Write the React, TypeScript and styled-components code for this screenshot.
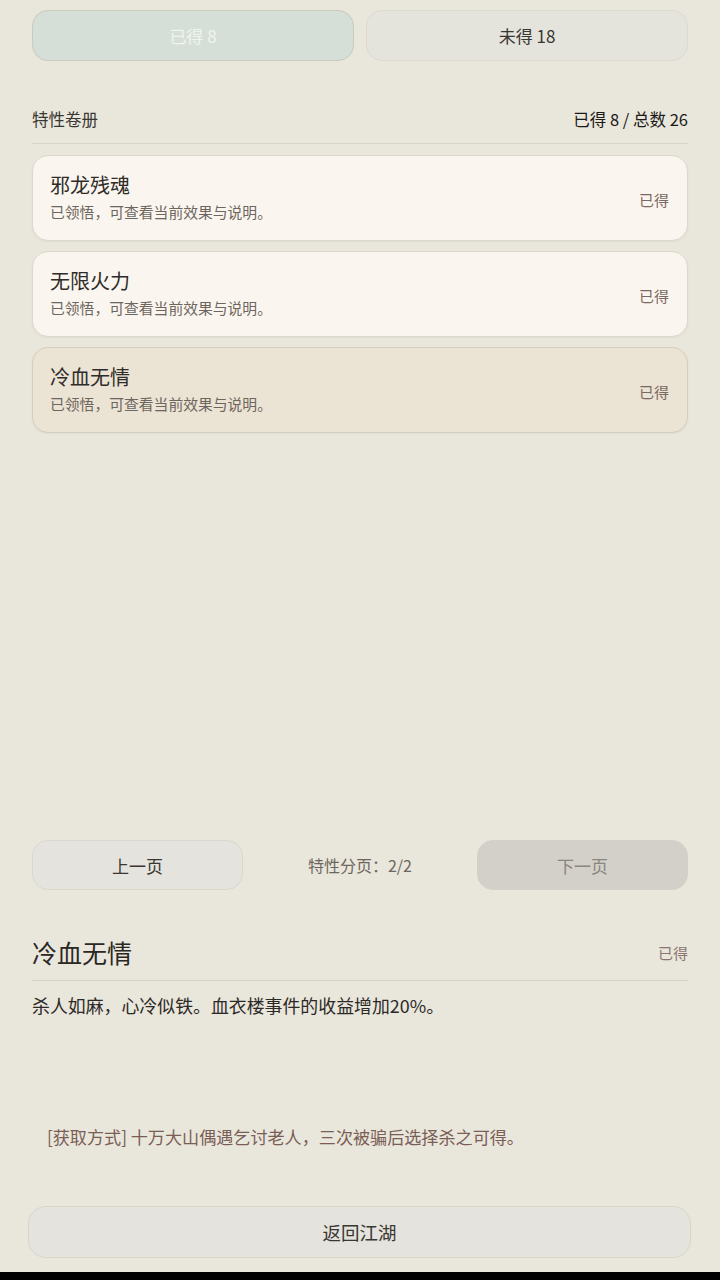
import { useState } from "react";
import styled, { createGlobalStyle } from "styled-components";

const GlobalStyle = createGlobalStyle`
  html, body {
    margin: 0;
    padding: 0;
    background: #e9e6dc;
  }
  body {
    font-family: "Noto Sans CJK SC", "Noto Sans", sans-serif;
    color: #2f2b28;
  }
  * {
    box-sizing: border-box;
  }
`;

const Page = styled.div`
  height: 100vh;
  min-height: 1280px;
  display: flex;
  flex-direction: column;
  padding: 10px 32px 0;
  background: #e9e6dc;
`;

const Tabs = styled.div`
  display: grid;
  grid-template-columns: 1fr 1fr;
  gap: 12px;
`;

const Tab = styled.button<{ $active: boolean }>`
  height: 51px;
  border-radius: 16px;
  font-family: inherit;
  font-size: 17px;
  border: 1.5px solid ${(p) => (p.$active ? "#c9cbbd" : "#dcdad0")};
  background: ${(p) => (p.$active ? "#d5dfd7" : "#e4e3dc")};
  color: ${(p) => (p.$active ? "#f1f3ee" : "#3a3632")};
  cursor: pointer;
`;

const SectionHead = styled.div`
  margin-top: 46px;
  padding-bottom: 12px;
  border-bottom: 1px solid #d7d3c8;
  display: flex;
  justify-content: space-between;
  align-items: center;
  line-height: 24px;
  font-size: 16.5px;
  color: #3a3632;
`;

const Count = styled.span`
  font-size: 16.5px;
  color: #1c1a18;
`;

const List = styled.ul`
  flex: 1;
  list-style: none;
  margin: 11px 0 0;
  padding: 0;
  display: flex;
  flex-direction: column;
  gap: 10px;
`;

const Card = styled.li<{ $selected: boolean }>`
  height: 86px;
  border-radius: 16px;
  border: 1px solid ${(p) => (p.$selected ? "#d5cdbd" : "#dcd8ce")};
  background: ${(p) => (p.$selected ? "#ebe3d4" : "#faf6ef")};
  box-shadow: 0 1px 2px rgba(80, 70, 50, 0.06);
  padding: 16px 18px 0 17px;
  display: grid;
  grid-template-columns: 1fr auto;
  grid-template-rows: 26px 20px;
  row-gap: 4px;
  cursor: pointer;
`;

const CardTitle = styled.div`
  font-size: 20px;
  line-height: 26px;
  color: #2f2b28;
`;

const CardDesc = styled.div`
  grid-row: 2;
  font-size: 14.8px;
  line-height: 20px;
  color: #6e665e;
`;

const Badge = styled.span<{ $muted?: boolean }>`
  font-size: 15px;
  color: ${(p) => (p.$muted ? "#8b7670" : "#7a6863")};
`;

const CardBadge = styled(Badge)`
  grid-column: 2;
  grid-row: 1 / 3;
  align-self: center;
  margin-top: 4px;
`;

const Pager = styled.div`
  height: 50px;
  display: grid;
  grid-template-columns: 211px 1fr 211px;
  align-items: center;
`;

const PagerButton = styled.button<{ $disabled?: boolean }>`
  height: 50px;
  border-radius: 16px;
  font-family: inherit;
  font-size: 17px;
  border: 1px solid ${(p) => (p.$disabled ? "#d3d0ca" : "#dad7cd")};
  background: ${(p) => (p.$disabled ? "#d3d0ca" : "#e4e3dd")};
  color: ${(p) => (p.$disabled ? "#8a857e" : "#3a3632")};
`;

const PagerText = styled.div`
  text-align: center;
  font-size: 16px;
  color: #6e665e;
`;

const DetailHead = styled.div`
  margin-top: 46px;
  padding-bottom: 12px;
  border-bottom: 1px solid #d5d1c6;
  display: flex;
  justify-content: space-between;
  align-items: center;
`;

const DetailTitle = styled.h2`
  margin: 0;
  font-size: 25px;
  line-height: 32px;
  font-weight: 400;
  color: #2a2724;
`;

const DetailText = styled.p`
  margin: 12px 0 0;
  font-size: 17.9px;
  line-height: 24px;
  color: #2c2926;
`;

const Source = styled.p`
  margin: 109px 0 0;
  padding-left: 15px;
  font-size: 17.1px;
  line-height: 22px;
  color: #7a5e55;
`;

const BackButton = styled.button`
  margin: 58px -3px 14px -4px;
  height: 52px;
  border-radius: 18px;
  border: 1px solid #d8d5cb;
  background: #e4e3dd;
  font-family: inherit;
  font-size: 18.5px;
  color: #3a3632;
`;

const NavBar = styled.div`
  height: 8px;
  margin: 0 -32px;
  background: #000;
`;

const traits = [
  { name: "邪龙残魂", desc: "已领悟，可查看当前效果与说明。" },
  { name: "无限火力", desc: "已领悟，可查看当前效果与说明。" },
  { name: "冷血无情", desc: "已领悟，可查看当前效果与说明。" },
];

export default function App() {
  const [tab, setTab] = useState<"got" | "missing">("got");
  const [selected, setSelected] = useState(2);

  return (
    <>
      <GlobalStyle />
      <Page>
        <Tabs>
          <Tab $active={tab === "got"} onClick={() => setTab("got")}>
            已得 8
          </Tab>
          <Tab $active={tab === "missing"} onClick={() => setTab("missing")}>
            未得 18
          </Tab>
        </Tabs>

        <SectionHead>
          <span>特性卷册</span>
          <Count>已得 8 / 总数 26</Count>
        </SectionHead>

        <List>
          {traits.map((t, i) => (
            <Card key={t.name} $selected={i === selected} onClick={() => setSelected(i)}>
              <CardTitle>{t.name}</CardTitle>
              <CardDesc>{t.desc}</CardDesc>
              <CardBadge>已得</CardBadge>
            </Card>
          ))}
        </List>

        <Pager>
          <PagerButton>上一页</PagerButton>
          <PagerText>特性分页：2/2</PagerText>
          <PagerButton $disabled>下一页</PagerButton>
        </Pager>

        <DetailHead>
          <DetailTitle>{traits[selected].name}</DetailTitle>
          <Badge $muted>已得</Badge>
        </DetailHead>
        <DetailText>杀人如麻，心冷似铁。血衣楼事件的收益增加20%。</DetailText>
        <Source>[获取方式] 十万大山偶遇乞讨老人，三次被骗后选择杀之可得。</Source>

        <BackButton>返回江湖</BackButton>
        <NavBar />
      </Page>
    </>
  );
}
